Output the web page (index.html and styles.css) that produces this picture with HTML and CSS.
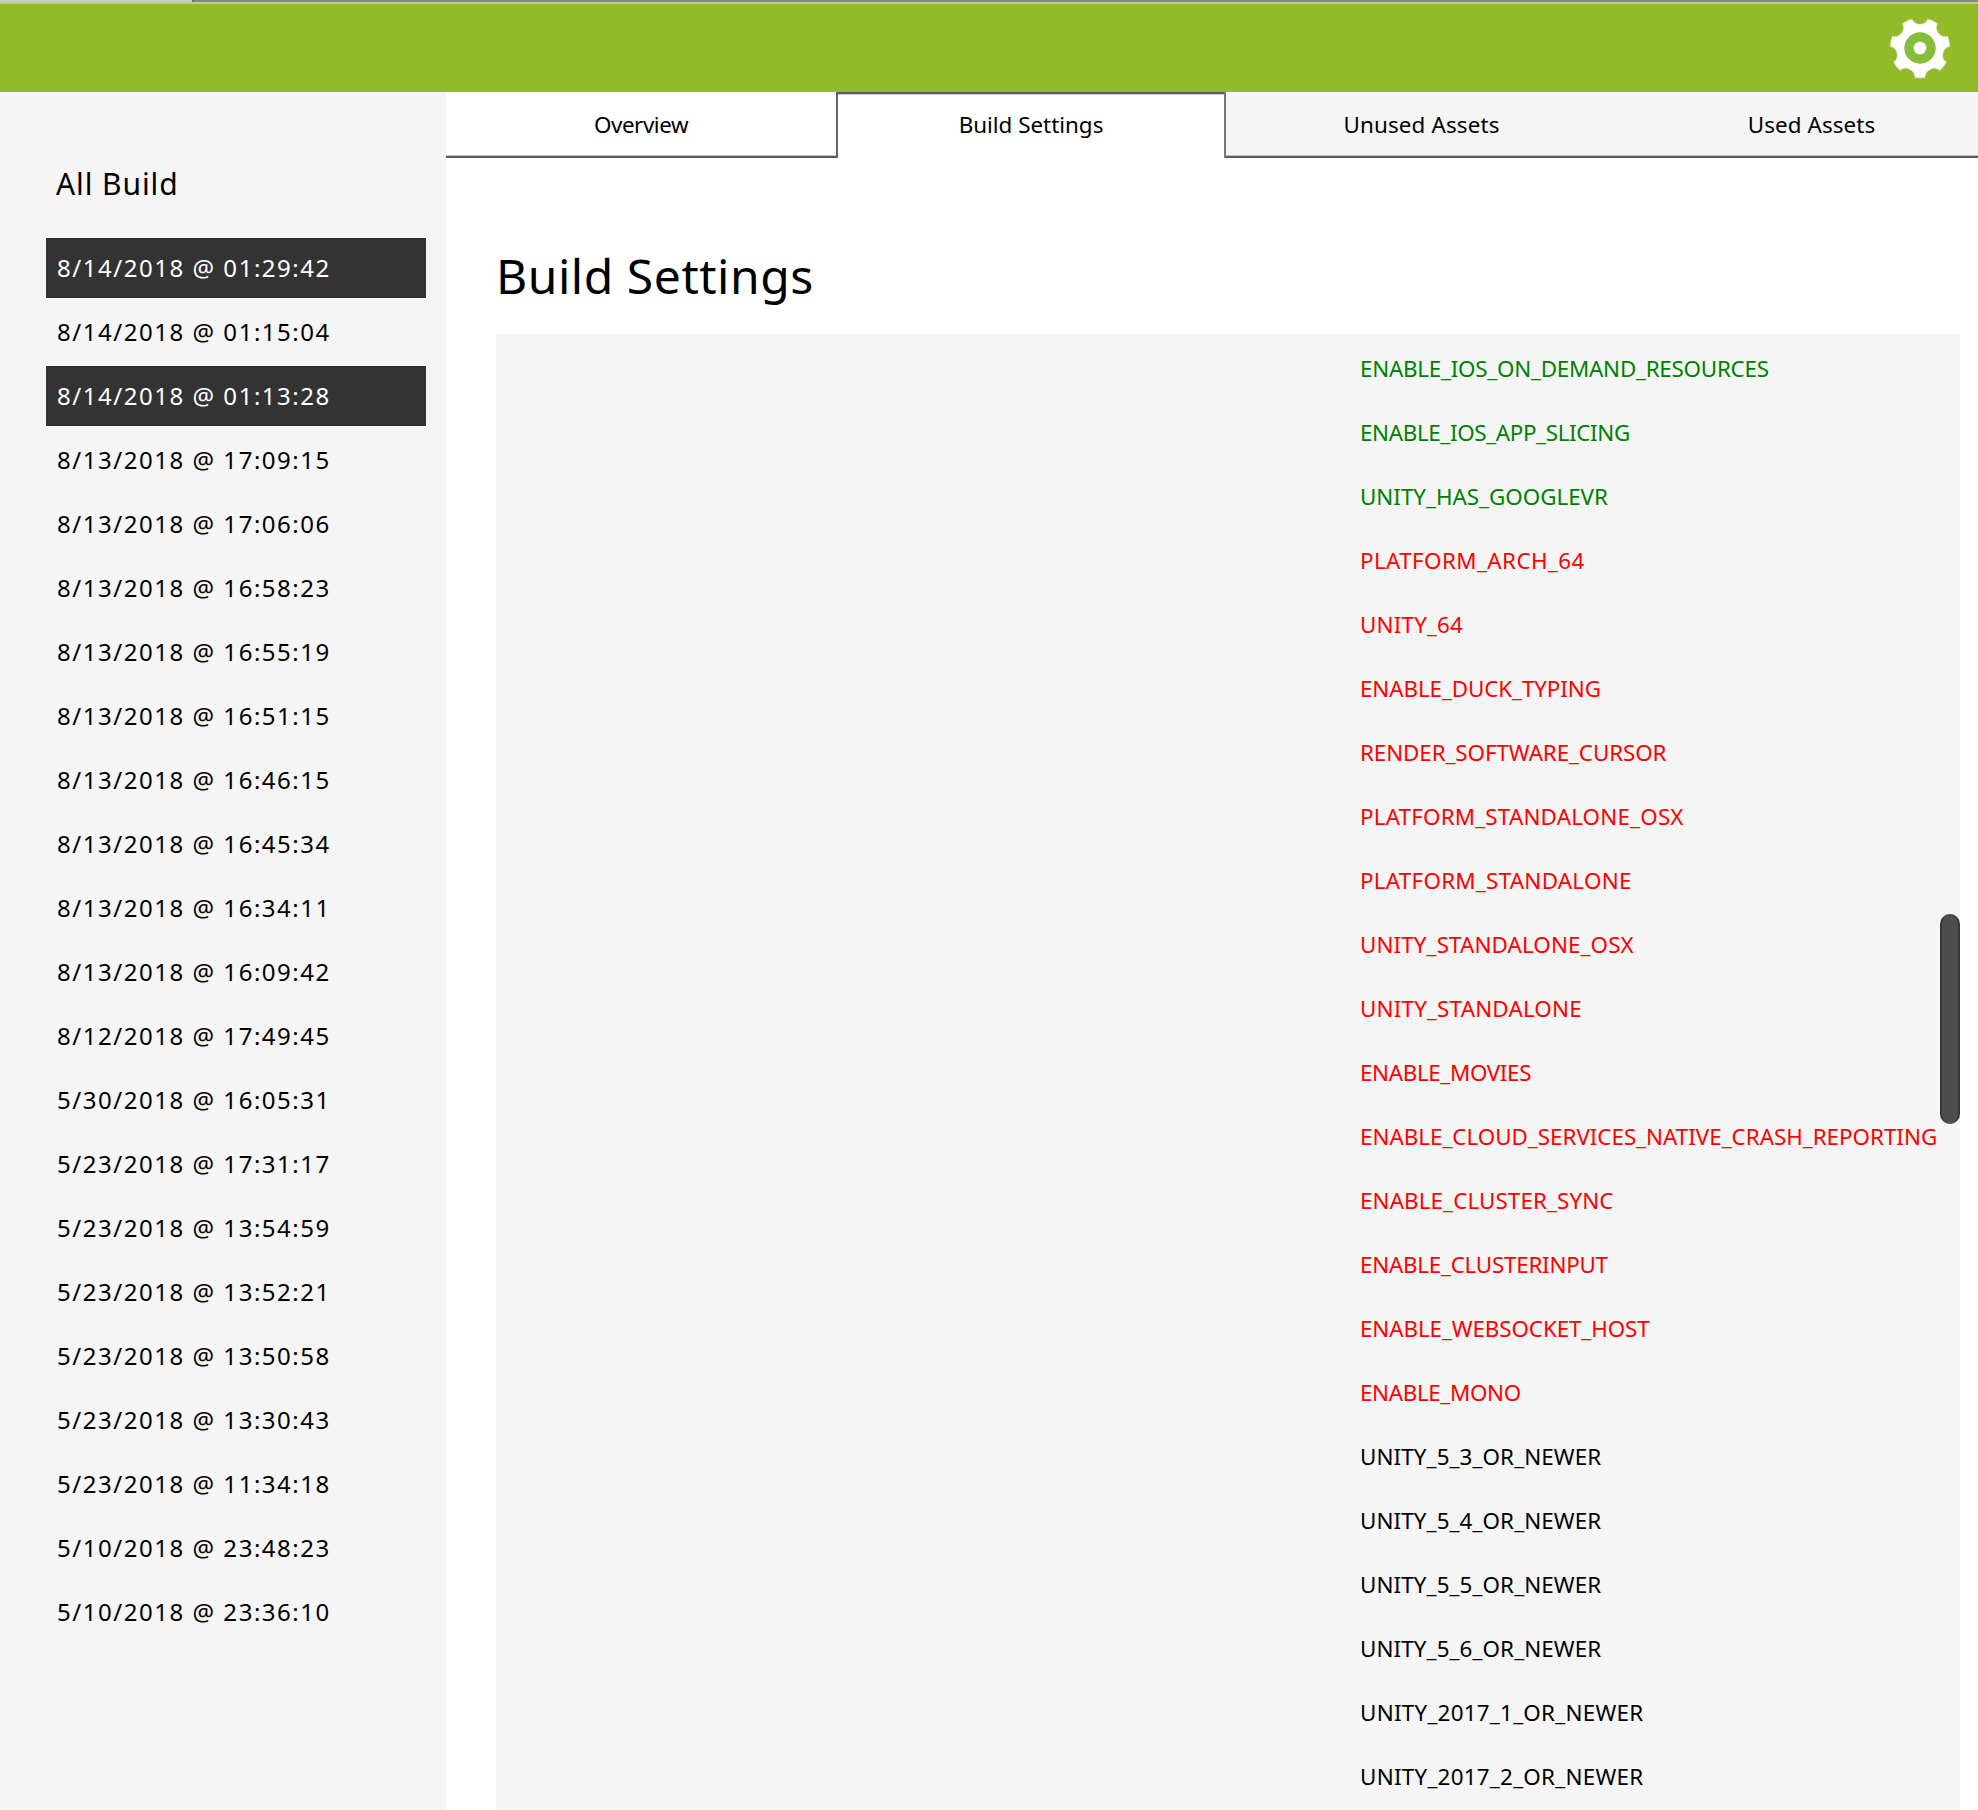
FILE: index.html
```html
<!DOCTYPE html>
<html lang="en">
<head>
<meta charset="utf-8">
<title>Build Settings</title>
<link rel="stylesheet" href="styles.css">
</head>
<body>
<div class="strip"><span class="strip-tab"></span></div>
<header class="topbar">
  <svg class="gear" viewBox="-31 -31 62 62" width="62" height="62" aria-label="Settings">
    <path fill="#fff" stroke="#c5dc8e" stroke-opacity=".6" stroke-width=".6" d="M5.3 29.6A30 30 0 0 1 -5.3 29.6A8.8 8.8 0 0 0 -19.8 22.6A30 30 0 0 1 -26.4 14.2A8.8 8.8 0 0 0 -29.95 -1.5A30 30 0 0 1 -27.6 -11.8A8.8 8.8 0 0 0 -17.6 -24.3A30 30 0 0 1 -8 -28.9A8.8 8.8 0 0 0 8 -28.9A30 30 0 0 1 17.6 -24.3A8.8 8.8 0 0 0 27.6 -11.8A30 30 0 0 1 29.95 -1.5A8.8 8.8 0 0 0 26.4 14.2A30 30 0 0 1 19.8 22.6A8.8 8.8 0 0 0 5.3 29.6Z"/>
    <circle r="11" fill="none" stroke="#86be3c" stroke-width="9.4"/>
  </svg>
</header>
<div class="layout">
  <aside class="sidebar">
    <h2 class="sidebar-title">All Build</h2>
    <ul class="builds">
      <li class="build selected">8/14/2018 @ 01:29:42</li>
      <li class="build">8/14/2018 @ 01:15:04</li>
      <li class="build selected">8/14/2018 @ 01:13:28</li>
      <li class="build">8/13/2018 @ 17:09:15</li>
      <li class="build">8/13/2018 @ 17:06:06</li>
      <li class="build">8/13/2018 @ 16:58:23</li>
      <li class="build">8/13/2018 @ 16:55:19</li>
      <li class="build">8/13/2018 @ 16:51:15</li>
      <li class="build">8/13/2018 @ 16:46:15</li>
      <li class="build">8/13/2018 @ 16:45:34</li>
      <li class="build">8/13/2018 @ 16:34:11</li>
      <li class="build">8/13/2018 @ 16:09:42</li>
      <li class="build">8/12/2018 @ 17:49:45</li>
      <li class="build">5/30/2018 @ 16:05:31</li>
      <li class="build">5/23/2018 @ 17:31:17</li>
      <li class="build">5/23/2018 @ 13:54:59</li>
      <li class="build">5/23/2018 @ 13:52:21</li>
      <li class="build">5/23/2018 @ 13:50:58</li>
      <li class="build">5/23/2018 @ 13:30:43</li>
      <li class="build">5/23/2018 @ 11:34:18</li>
      <li class="build">5/10/2018 @ 23:48:23</li>
      <li class="build">5/10/2018 @ 23:36:10</li>
    </ul>
  </aside>
  <main class="main">
    <nav class="tabs">
      <div class="tab overview">Overview</div>
      <div class="tab active">Build Settings</div>
      <div class="tab muted unused">Unused Assets</div>
      <div class="tab muted used">Used Assets</div>
    </nav>
    <h1 class="title">Build Settings</h1>
    <section class="panel">
      <ul class="defines">
        <li class="added tight">ENABLE_IOS_ON_DEMAND_RESOURCES</li>
        <li class="added tighter">ENABLE_IOS_APP_SLICING</li>
        <li class="added">UNITY_HAS_GOOGLEVR</li>
        <li class="removed widest">PLATFORM_ARCH_64</li>
        <li class="removed wide">UNITY_64</li>
        <li class="removed snug">ENABLE_DUCK_TYPING</li>
        <li class="removed snug">RENDER_SOFTWARE_CURSOR</li>
        <li class="removed wide">PLATFORM_STANDALONE_OSX</li>
        <li class="removed wider">PLATFORM_STANDALONE</li>
        <li class="removed slight">UNITY_STANDALONE_OSX</li>
        <li class="removed wide">UNITY_STANDALONE</li>
        <li class="removed tighter">ENABLE_MOVIES</li>
        <li class="removed">ENABLE_CLOUD_SERVICES_NATIVE_CRASH_REPORTING</li>
        <li class="removed slight">ENABLE_CLUSTER_SYNC</li>
        <li class="removed tight">ENABLE_CLUSTERINPUT</li>
        <li class="removed snug">ENABLE_WEBSOCKET_HOST</li>
        <li class="removed tighter">ENABLE_MONO</li>
        <li class="slight">UNITY_5_3_OR_NEWER</li>
        <li class="slight">UNITY_5_4_OR_NEWER</li>
        <li class="slight">UNITY_5_5_OR_NEWER</li>
        <li class="slight">UNITY_5_6_OR_NEWER</li>
        <li class="wider">UNITY_2017_1_OR_NEWER</li>
        <li class="wider">UNITY_2017_2_OR_NEWER</li>
      </ul>
      <div class="scrollbar"></div>
    </section>
  </main>
</div>
</body>
</html>
```
FILE: styles.css
```css
* { box-sizing: border-box; margin: 0; padding: 0; }
body {
  height: 1810px;
  overflow: hidden;
  display: flex;
  flex-direction: column;
  background: #fff;
  color: #000;
  font-family: "Noto Sans", "Open Sans", sans-serif;
}
ul { list-style: none; }

.strip { flex: none; height: 2px; background: #868686; }
.strip-tab {
  display: block;
  width: 194px;
  height: 2px;
  background: #c9c9c9;
  border-right: 2px solid #6e6e6e;
}
.topbar {
  flex: none;
  height: 90px;
  display: flex;
  justify-content: flex-end;
  padding: 13px 27px 0 0;
  background: #91bb29;
  border-top: 2px solid #bbd575;
}
.gear { display: block; }

.layout { flex: 1; min-height: 0; display: flex; }
.sidebar {
  flex: none;
  width: 446px;
  padding: 72px 20px 0 46px;
  background: #f5f5f5;
}
.sidebar-title {
  padding-left: 10px;
  font-size: 30px;
  font-weight: 400;
  line-height: 40px;
  letter-spacing: .9px;
}
.builds {
  display: flex;
  flex-direction: column;
  gap: 4px;
  margin-top: 34px;
}
.build {
  height: 60px;
  padding-left: 11px;
  font-size: 24px;
  line-height: 59px;
  letter-spacing: 1.53px;
  white-space: nowrap;
}
.build.selected { background: #333; color: #fff; }

.main {
  flex: 1;
  min-width: 0;
  display: flex;
  flex-direction: column;
  overflow: hidden;
}
.tabs { flex: none; display: flex; height: 66px; }
.tab {
  flex: none;
  width: 390px;
  font-size: 22.4px;
  line-height: 65px;
  text-align: center;
  white-space: nowrap;
  box-shadow: inset 0 -2px #5a5a5a, inset 0 -3px #c8c8c8;
}
.tab.overview { letter-spacing: -.44px; }
.tab.active {
  box-shadow: inset 2px 0 #666, inset -2px 0 #777, inset 0 2px #5a5a5a, inset 0 3px #ccc;
}
.tab.muted { background: #f5f5f5; }
.tab.unused { padding-left: 1px; letter-spacing: .15px; }
.tab.used { padding-left: 1px; letter-spacing: .08px; }

.title {
  flex: none;
  margin: 88px 0 0 50px;
  font-size: 48px;
  font-weight: 400;
  line-height: 60px;
  letter-spacing: .54px;
}
.panel {
  flex: 1;
  min-height: 0;
  display: flex;
  justify-content: flex-end;
  margin: 28px 18px 0 50px;
  background: #f5f5f5;
}
.defines {
  width: 580px;
  padding-top: 3px;
  font-size: 22.4px;
  line-height: 64px;
  white-space: nowrap;
}
.scrollbar {
  flex: none;
  width: 20px;
  height: 210px;
  margin-top: 580px;
  border: solid #363636;
  border-width: 0 2px;
  border-radius: 10px;
  background: #4d4d4d;
}
.added { color: #008000; }
.removed { color: #f00; }
.defines { letter-spacing: -.02px; }
.tighter { letter-spacing: -.36px; }
.tight { letter-spacing: -.25px; }
.snug { letter-spacing: -.1px; }
.slight { letter-spacing: .1px; }
.wide { letter-spacing: .18px; }
.wider { letter-spacing: .26px; }
.widest { letter-spacing: .4px; }
```
